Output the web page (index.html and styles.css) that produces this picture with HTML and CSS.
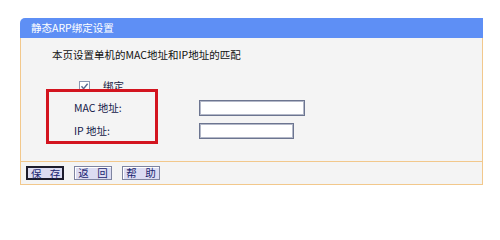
FILE: index.html
```html
<!DOCTYPE html>
<html lang="zh-CN">
<head>
<meta charset="utf-8">
<title>静态ARP绑定设置</title>
<link rel="stylesheet" href="styles.css">
</head>
<body>
<div class="card">
  <div class="head">静态ARP绑定设置</div>
  <div class="body">
    <p class="intro">本页设置单机的MAC地址和IP地址的匹配</p>
    <div class="bind">
      <span class="chk"><svg width="11" height="11" viewBox="0 0 11 11"><rect x="0.5" y="0.5" width="10" height="10" fill="#fff" stroke="#8b98b3"/><path d="M2.5 5.2 L4.6 7.6 L8.6 2.8" fill="none" stroke="#5a6a8f" stroke-width="1.4"/></svg></span>
      <span class="bind-label">绑定</span>
    </div>
    <div class="field">
      <label class="lbl">MAC 地址:</label>
      <input class="inp inp-mac" type="text">
    </div>
    <div class="field">
      <label class="lbl">IP 地址:</label>
      <input class="inp inp-ip" type="text">
    </div>
    <div class="mark"></div>
  </div>
  <div class="foot">
    <button class="btn btn-focus">保&nbsp;存</button>
    <button class="btn">返&nbsp;回</button>
    <button class="btn">帮&nbsp;助</button>
  </div>
</div>
</body>
</html>
```
FILE: styles.css
```css
html, body {
  margin: 0;
  padding: 0;
  background: #ffffff;
}
body {
  font-family: "Noto Sans CJK SC", "Liberation Sans", sans-serif;
  font-size: 10.5px;
  color: #111;
}
.card {
  margin: 18px 0 0 20px;
  width: 463px;
}
.head {
  height: 20px;
  line-height: 20px;
  background: #5e8ff5;
  color: #ffffff;
  padding-left: 11px;
  border-radius: 5px 0 0 0;
}
.body {
  position: relative;
  background: #f4f4f4;
  border-left: 1px solid #f2c88c;
  border-right: 1px solid #f2c88c;
  padding: 10px 0 22px 0;
}
.intro {
  margin: 0;
  padding-left: 31px;
  height: 14px;
  line-height: 14px;
  color: #111;
}
.bind {
  margin-top: 17px;
  height: 14px;
  display: flex;
  align-items: center;
  padding-left: 58px;
}
.chk {
  display: flex;
  width: 11px;
  height: 11px;
}
.bind-label {
  margin-left: 13px;
  line-height: 14px;
  color: #1a2444;
}
.field {
  margin-top: 7px;
  height: 16px;
  display: flex;
  align-items: center;
  padding-left: 53px;
}
.lbl {
  width: 125px;
  color: #14204a;
  line-height: 16px;
}
.inp {
  box-sizing: border-box;
  height: 16px;
  margin: 0;
  padding: 0;
  background: #ffffff;
  border: 1px solid #6c7590;
  box-shadow: inset 0 0 0 1px #b3b8c8;
  outline: none;
}
.inp-mac { width: 106px; }
.inp-ip { width: 95px; }
.mark {
  position: absolute;
  left: 25px;
  top: 51px;
  width: 112px;
  height: 55px;
  box-sizing: border-box;
  border: 3px solid #d3141f;
}
.foot {
  height: 22px;
  background: #f4f4f4;
  border: 1px solid #f2c88c;
  display: flex;
  align-items: center;
  padding-left: 5px;
}
.btn {
  box-sizing: border-box;
  width: 38px;
  height: 14px;
  margin: 0 10px 0 0;
  padding: 0 0 0 3px;
  font-family: "Noto Sans CJK SC", sans-serif;
  font-size: 10.5px;
  line-height: 12px;
  letter-spacing: 3px;
  color: #1a2670;
  background: #dcdcf2;
  border: 1px solid #7e84a0;
  box-shadow: inset 1px 1px 0 #ffffff;
}
.btn-focus {
  border: 2px solid #1c1c2c;
  box-shadow: none;
}
```
